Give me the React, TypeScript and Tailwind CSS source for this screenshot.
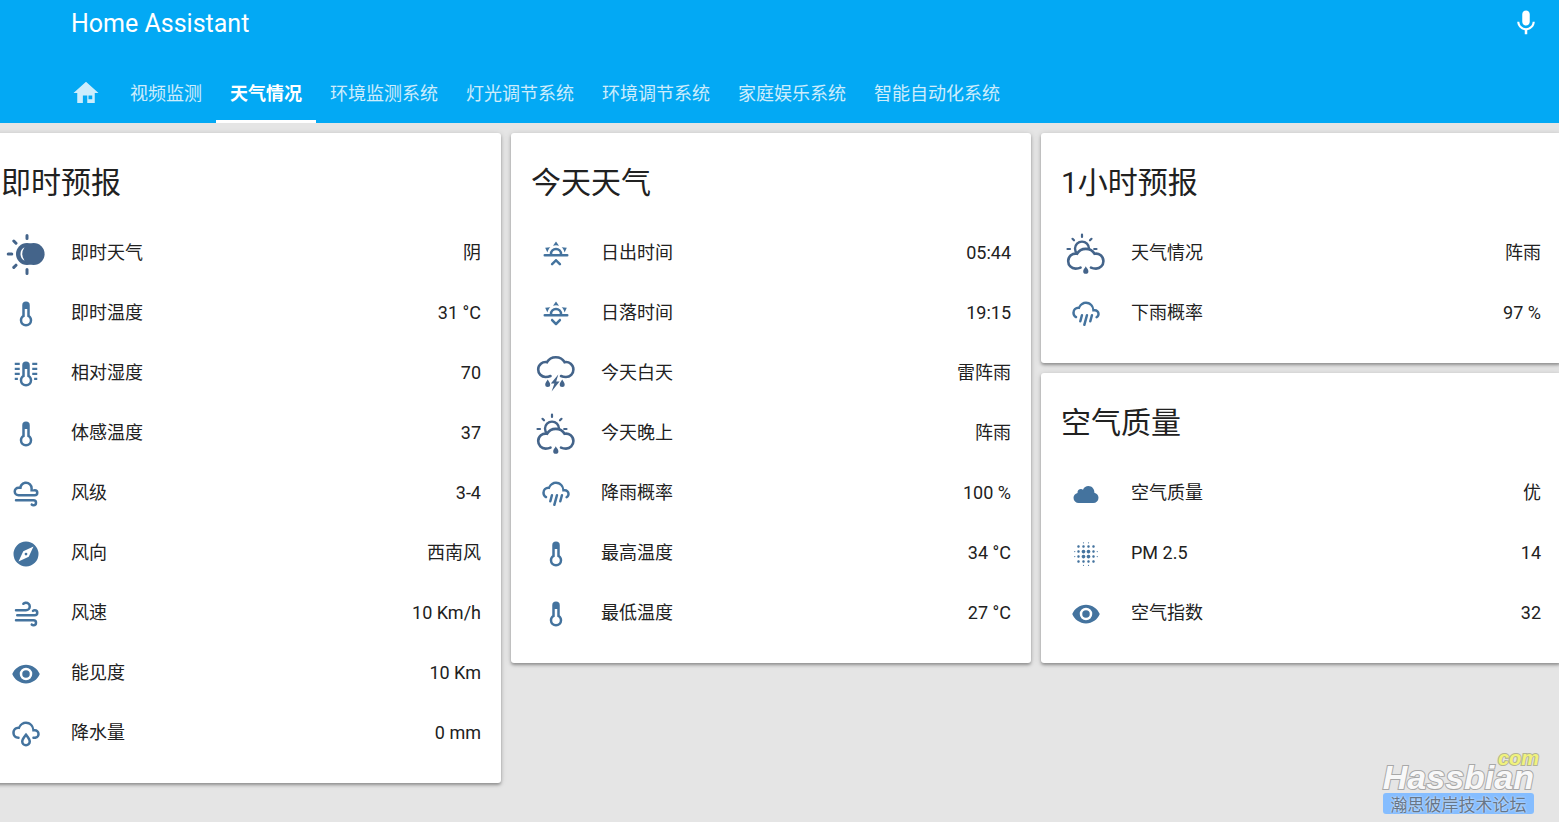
import type { ReactNode } from "react";
import { MdBlurOn, MdMic } from "react-icons/md";

interface Row {
  icon: ReactNode;
  name: string;
  value: string;
}

interface CardProps {
  title: string;
  rows: Row[];
}

const THERMOMETER =
  "M17,17A5,5 0 0,1 12,22A5,5 0 0,1 7,17C7,15.36 7.79,13.91 9,13V5A3,3 0 0,1 12,2A3,3 0 0,1 15,5V13C16.21,13.91 17,15.36 17,17M11,8V14.17C9.83,14.58 9,15.69 9,17A3,3 0 0,0 12,20A3,3 0 0,0 15,17C15,15.69 14.17,14.58 13,14.17V8H11Z";
const HUMIDITY =
  THERMOMETER +
  "M3,3H7V4.8H3ZM3,7H7V8.8H3ZM3,11H7V12.8H3ZM3,15H5.5V16.8H3ZM17,3H21V4.8H17ZM17,7H21V8.8H17ZM17,11H21V12.8H17ZM18.5,15H21V16.8H18.5Z";
const GUST =
  "M18,18H4A1,1 0 0,1 3,17A1,1 0 0,1 4,16H18A3,3 0 0,1 21,19A3,3 0 0,1 18,22C17.17,22 16.42,21.66 15.88,21.12C15.5,20.73 15.5,20.1 15.88,19.71C16.27,19.32 16.9,19.32 17.29,19.71C17.47,19.89 17.72,20 18,20A1,1 0 0,0 19,19A1,1 0 0,0 18,18Z";
const WIND_CLOUD =
  "M6,6L6.69,6.06C7.32,3.72 9.46,2 12,2A5.5,5.5 0 0,1 17.5,7.5L17.42,8.45C17.88,8.16 18.42,8 19,8A3,3 0 0,1 22,11A3,3 0 0,1 19,14H6A4,4 0 0,1 2,10A4,4 0 0,1 6,6M6,8A2,2 0 0,0 4,10A2,2 0 0,0 6,12H19A1,1 0 0,0 20,11A1,1 0 0,0 19,10H15.5V7.5A3.5,3.5 0 0,0 12,4A3.5,3.5 0 0,0 8.5,7.5V8H6" +
  GUST;
const WINDY =
  "M4,10A1,1 0 0,1 3,9A1,1 0 0,1 4,8H12A2,2 0 0,0 14,6A2,2 0 0,0 12,4C11.45,4 10.95,4.22 10.59,4.59C10.2,5 9.56,5 9.17,4.59C8.78,4.2 8.78,3.56 9.17,3.17C9.9,2.45 10.9,2 12,2A4,4 0 0,1 16,6A4,4 0 0,1 12,10H4M19,12A1,1 0 0,0 20,11A1,1 0 0,0 19,10C18.72,10 18.47,10.11 18.29,10.29C17.9,10.68 17.27,10.68 16.88,10.29C16.5,9.9 16.5,9.27 16.88,8.88C17.42,8.34 18.17,8 19,8A3,3 0 0,1 22,11A3,3 0 0,1 19,14H5A1,1 0 0,1 4,13A1,1 0 0,1 5,12H19" +
  GUST;
const COMPASS =
  "M14.19,14.19L6,18L9.81,9.81L18,6M12,2A10,10 0 0,0 2,12A10,10 0 0,0 12,22A10,10 0 0,0 22,12A10,10 0 0,0 12,2M12,10.9A1.1,1.1 0 0,0 10.9,12A1.1,1.1 0 0,0 12,13.1A1.1,1.1 0 0,0 13.1,12A1.1,1.1 0 0,0 12,10.9Z";
const EYE =
  "M12,9A3,3 0 0,0 9,12A3,3 0 0,0 12,15A3,3 0 0,0 15,12A3,3 0 0,0 12,9M12,17A5,5 0 0,1 7,12A5,5 0 0,1 12,7A5,5 0 0,1 17,12A5,5 0 0,1 12,17M12,4.5C7,4.5 2.73,7.61 1,12C2.73,16.39 7,19.5 12,19.5C17,19.5 21.27,16.39 23,12C21.27,7.61 17,4.5 12,4.5Z";
const RAINY =
  "M6,14.03A1,1 0 0,1 7,15.03C7,15.58 6.55,16.03 6,16.03C3.24,16.03 1,13.79 1,11.03C1,8.27 3.24,6.03 6,6.03C7,3.68 9.3,2.03 12,2.03C15.43,2.03 18.24,4.69 18.5,8.06L19,8.03A4,4 0 0,1 23,12.03C23,14.23 21.21,16.03 19,16.03H18C17.45,16.03 17,15.58 17,15.03C17,14.47 17.45,14.03 18,14.03H19A2,2 0 0,0 21,12.03A2,2 0 0,0 19,10.03H17V9.03C17,6.27 14.76,4.03 12,4.03C9.5,4.03 7.45,5.84 7.06,8.21C6.73,8.09 6.37,8.03 6,8.03A3,3 0 0,0 3,11.03A3,3 0 0,0 6,14.03M12,14.15C12.18,14.39 12.37,14.66 12.56,14.94C13,15.56 14,17.03 14,18C14,19.11 13.1,20 12,20A2,2 0 0,1 10,18C10,17.03 11,15.56 11.44,14.94C11.63,14.66 11.82,14.4 12,14.15M12,11.03L11.5,11.59C11.5,11.59 10.65,12.55 9.79,13.81C8.93,15.06 8,16.56 8,18A4,4 0 0,0 12,22A4,4 0 0,0 16,18C16,16.56 15.07,15.06 14.21,13.81C13.35,12.55 12.5,11.59 12.5,11.59";
const POURING =
  "M9,12C9.53,12.14 9.85,12.69 9.71,13.22L8.41,18.05C8.27,18.59 7.72,18.9 7.19,18.76C6.65,18.62 6.34,18.07 6.5,17.54L7.78,12.71C7.92,12.17 8.47,11.86 9,12M13,12C13.53,12.14 13.85,12.69 13.71,13.22L11.64,20.95C11.5,21.5 10.95,21.8 10.41,21.66C9.88,21.5 9.56,20.97 9.7,20.43L11.78,12.71C11.92,12.17 12.47,11.86 13,12M17,12C17.53,12.14 17.85,12.69 17.71,13.22L16.41,18.05C16.27,18.59 15.72,18.9 15.19,18.76C14.65,18.62 14.34,18.07 14.5,17.54L15.78,12.71C15.92,12.17 16.47,11.86 17,12M17,10V9A5,5 0 0,0 12,4C9.5,4 7.45,5.82 7.06,8.19C6.73,8.07 6.37,8 6,8A3,3 0 0,0 3,11C3,12.11 3.6,13.08 4.5,13.6V13.59C5,13.87 5.14,14.5 4.87,14.96C4.59,15.43 4,15.6 3.5,15.32V15.33C2,14.47 1,12.85 1,11A5,5 0 0,1 6,6C7,3.65 9.3,2 12,2C15.43,2 18.24,4.66 18.5,8.03L19,8A4,4 0 0,1 23,12C23,13.5 22.2,14.77 21,15.46V15.46C20.5,15.73 19.91,15.57 19.63,15.09C19.36,14.61 19.5,14 20,13.72V13.73C20.6,13.39 21,12.74 21,12A2,2 0 0,0 19,10H17Z";
const HORIZON =
  "M3,12H7A5,5 0 0,1 12,7A5,5 0 0,1 17,12H21A1,1 0 0,1 22,13A1,1 0 0,1 21,14H3A1,1 0 0,1 2,13A1,1 0 0,1 3,12M15,12A3,3 0 0,0 12,9A3,3 0 0,0 9,12H15M12,2L14.39,5.42C13.65,5.15 12.84,5 12,5C11.16,5 10.35,5.15 9.61,5.42L12,2M3.34,7L7.5,6.65C6.9,7.16 6.36,7.78 5.94,8.5C5.5,9.24 5.25,10 5.11,10.79L3.34,7M20.65,7L18.88,10.79C18.74,10 18.47,9.23 18.05,8.5C17.63,7.78 17.1,7.15 16.5,6.64L20.65,7";
const SUNRISE =
  HORIZON +
  "M12.71,16.3L15.82,19.41C16.21,19.8 16.21,20.43 15.82,20.82C15.43,21.21 14.8,21.21 14.41,20.82L12,18.41L9.59,20.82C9.2,21.21 8.57,21.21 8.18,20.82C7.79,20.43 7.79,19.8 8.18,19.41L11.29,16.3C11.5,16.1 11.74,16 12,16C12.26,16 12.5,16.1 12.71,16.3Z";
const SUNSET =
  HORIZON +
  "M12.71,20.71L15.82,17.6C16.21,17.21 16.21,16.57 15.82,16.18C15.43,15.79 14.8,15.79 14.41,16.18L12,18.59L9.59,16.18C9.2,15.79 8.57,15.79 8.18,16.18C7.79,16.57 7.79,17.21 8.18,17.6L11.29,20.71C11.5,20.9 11.74,21 12,21C12.26,21 12.5,20.9 12.71,20.71Z";
const CLOUD =
  "M6.2,19.2A4.2,4.2 0 0,1 2,15C2,13.1 3.3,11.6 5.2,11.1C5,9.2 6.4,8 8,8C8.6,8 9.1,8.2 9.6,8.5C10.4,6.6 12,5.6 13.9,5.6C16.8,5.6 18.8,7.9 18.7,10.9C20.6,11.3 22,12.9 22,15A4.2,4.2 0 0,1 17.8,19.2Z";
const HOME = "M12,3L2,12H5V20H9.5V14H13V20H19V12H22L12,3M14,14H17V17H14V14Z";

// outline shared by the large rain icons
const BIG_CLOUD =
  "M19.5,27C18,27.7 16,28 14.5,28A7.4,7.4 0 0,1 7.2,20.5A7.4,7.4 0 0,1 16,13.2C17.8,10 21,8.3 24.8,8.3C28.6,8.3 31.8,10 33.6,13.2A7.4,7.4 0 0,1 42.4,20.5A7.4,7.4 0 0,1 35,28C33,28 31.5,27.7 30,27";

function Icon({ d }: { d: string }) {
  return (
    <svg viewBox="0 0 24 24" className="size-[30px]" fill="currentColor" aria-hidden="true">
      <path d={d} />
    </svg>
  );
}

function OvercastIcon() {
  return (
    <svg viewBox="0 0 50 50" className="size-[50px] text-[#44648a]" aria-hidden="true">
      <path
        d="M26,6.5V9.5M26,40.5V44.5M7.2,25H10.8M12.8,12L15,14.2M12.8,38.4L15,36.2"
        stroke="currentColor"
        strokeWidth="3"
        strokeLinecap="round"
      />
      <circle cx="26" cy="25" r="11" fill="currentColor" />
      <circle cx="32.6" cy="25" r="11" fill="currentColor" />
      <path d="M23.5,18.3A7.6,7.6 0 0,0 23.5,31.7A12,12 0 0,1 23.5,18.3Z" fill="#fff" />
    </svg>
  );
}

function ThunderIcon() {
  return (
    <svg viewBox="0 0 50 50" className="size-[50px] text-[#44648a]" aria-hidden="true">
      <path d={BIG_CLOUD} fill="none" stroke="currentColor" strokeWidth="2.6" strokeLinecap="round" />
      <path
        d="M27.3,25.5L19.8,34.6H23.4L20.6,42.4L28.6,32.6H25.2L27.3,25.5ZM16.7,30.5C17.6,32.3 19.2,33.8 19.2,35.6A2.5,2.5 0 0,1 14.2,35.6C14.2,33.8 15.8,32.3 16.7,30.5ZM31.2,30.5C32.1,32.3 33.7,33.8 33.7,35.6A2.5,2.5 0 0,1 28.7,35.6C28.7,33.8 30.3,32.3 31.2,30.5Z"
        fill="currentColor"
      />
    </svg>
  );
}

function ShowerIcon() {
  return (
    <svg viewBox="0 0 50 50" className="size-[50px] text-[#44648a]" aria-hidden="true">
      <path
        d="M21,5.5V8M11.5,9.8L13,11.3M30.5,9.8L29,11.3M6.5,20H9M33.2,20H35.5"
        stroke="currentColor"
        strokeWidth="2.2"
        strokeLinecap="round"
      />
      <circle cx="21" cy="19.6" r="7" fill="none" stroke="currentColor" strokeWidth="2.4" />
      <path
        d={BIG_CLOUD}
        transform="translate(0 11.6)"
        fill="#fff"
        stroke="currentColor"
        strokeWidth="2.6"
        strokeLinecap="round"
      />
      <path
        d="M24.8,37.3C25.8,39.3 27.4,40.6 27.4,42.2A2.6,2.6 0 0,1 22.2,42.2C22.2,40.6 23.8,39.3 24.8,37.3Z"
        fill="currentColor"
      />
    </svg>
  );
}

const tabs = ["视频监测", "天气情况", "环境监测系统", "灯光调节系统", "环境调节系统", "家庭娱乐系统", "智能自动化系统"];
const activeTab = "天气情况";

const columns: CardProps[][] = [
  [
    {
      title: "即时预报",
      rows: [
        { icon: <OvercastIcon />, name: "即时天气", value: "阴" },
        { icon: <Icon d={THERMOMETER} />, name: "即时温度", value: "31 °C" },
        { icon: <Icon d={HUMIDITY} />, name: "相对湿度", value: "70" },
        { icon: <Icon d={THERMOMETER} />, name: "体感温度", value: "37" },
        { icon: <Icon d={WIND_CLOUD} />, name: "风级", value: "3-4" },
        { icon: <Icon d={COMPASS} />, name: "风向", value: "西南风" },
        { icon: <Icon d={WINDY} />, name: "风速", value: "10 Km/h" },
        { icon: <Icon d={EYE} />, name: "能见度", value: "10 Km" },
        { icon: <Icon d={RAINY} />, name: "降水量", value: "0 mm" },
      ],
    },
  ],
  [
    {
      title: "今天天气",
      rows: [
        { icon: <Icon d={SUNRISE} />, name: "日出时间", value: "05:44" },
        { icon: <Icon d={SUNSET} />, name: "日落时间", value: "19:15" },
        { icon: <ThunderIcon />, name: "今天白天", value: "雷阵雨" },
        { icon: <ShowerIcon />, name: "今天晚上", value: "阵雨" },
        { icon: <Icon d={POURING} />, name: "降雨概率", value: "100 %" },
        { icon: <Icon d={THERMOMETER} />, name: "最高温度", value: "34 °C" },
        { icon: <Icon d={THERMOMETER} />, name: "最低温度", value: "27 °C" },
      ],
    },
  ],
  [
    {
      title: "1小时预报",
      rows: [
        { icon: <ShowerIcon />, name: "天气情况", value: "阵雨" },
        { icon: <Icon d={POURING} />, name: "下雨概率", value: "97 %" },
      ],
    },
    {
      title: "空气质量",
      rows: [
        { icon: <Icon d={CLOUD} />, name: "空气质量", value: "优" },
        { icon: <MdBlurOn className="size-[30px]" />, name: "PM 2.5", value: "14" },
        { icon: <Icon d={EYE} />, name: "空气指数", value: "32" },
      ],
    },
  ],
];

function Card({ title, rows }: CardProps) {
  return (
    <section className="rounded-[3px] bg-white px-5 pb-5 shadow-[0_2px_3px_rgba(0,0,0,0.3),0_1px_6px_rgba(0,0,0,0.14)]">
      <h2 className="pt-[30px] pb-5 text-[30px] leading-10">{title}</h2>
      <ul>
        {rows.map((row) => (
          <li key={row.name} className="flex h-[60px] items-center">
            <span className="flex h-[51px] w-[50px] shrink-0 items-center justify-center pt-px text-[#44739e]">
              {row.icon}
            </span>
            <span className="ml-5 flex-1 truncate">{row.name}</span>
            <span>{row.value}</span>
          </li>
        ))}
      </ul>
    </section>
  );
}

export default function App() {
  return (
    <div className="relative min-h-screen overflow-hidden bg-[#e5e5e5] font-[Roboto,'Noto_Sans_CJK_SC',sans-serif] text-lg text-[#212121]">
      <header className="bg-[#03a9f4] text-white">
        <div className="flex h-[63px] items-start justify-between pt-2 pr-[18px] pl-[71px]">
          <h1 className="text-[25px] leading-8">Home Assistant</h1>
          <button type="button" aria-label="语音">
            <MdMic className="size-[30px]" />
          </button>
        </div>
        <nav className="flex h-[60px] pl-14">
          <a href="#home" aria-label="主页" className="flex w-[60px] items-center justify-center opacity-80">
            <Icon d={HOME} />
          </a>
          {tabs.map((tab) => (
            <a
              key={tab}
              href={`#${tab}`}
              className={
                tab === activeTab
                  ? "flex items-center border-b-3 border-white px-[14px] pt-[5px] font-bold whitespace-nowrap"
                  : "flex items-center px-[14px] pt-[2px] whitespace-nowrap opacity-80"
              }
            >
              {tab}
            </a>
          ))}
        </nav>
      </header>

      <main className="mt-[10px] -mr-[2px] -ml-[19px] grid grid-cols-3 items-start gap-[10px]">
        {columns.map((cards, i) => (
          <div key={i} className="flex flex-col gap-[10px]">
            {cards.map((card) => (
              <Card key={card.title} {...card} />
            ))}
          </div>
        ))}
      </main>

      {/* forum mark in the corner */}
      <div className="absolute right-5 bottom-2 flex flex-col font-['Liberation_Sans',sans-serif] font-bold">
        <span className="self-end text-xl leading-3 text-[#f0f27c] italic [-webkit-text-stroke:2px_#b4b496] [paint-order:stroke_fill]">
          com
        </span>
        <span className="mr-[5px] pb-[3px] text-[34px] leading-[26px] text-[#f8f8f8] italic [-webkit-text-stroke:2px_#a8a8a8] [paint-order:stroke_fill]">
          Hassbian
        </span>
        <span className="mr-[5px] rounded-[3px] bg-[#85bdff] text-center font-['Noto_Sans_CJK_SC',sans-serif] text-[17px] leading-[21px] font-normal text-[#667688] [text-shadow:0_0_2px_#fff]">
          瀚思彼岸技术论坛
        </span>
      </div>
    </div>
  );
}
